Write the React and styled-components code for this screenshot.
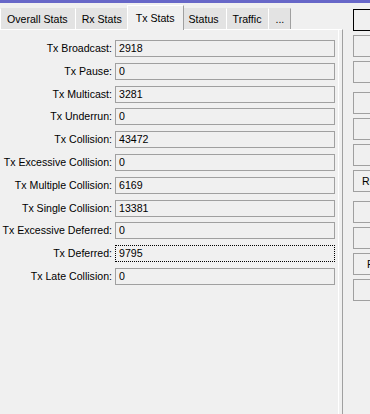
import React from 'react';
import styled, { createGlobalStyle } from 'styled-components';

const GlobalStyle = createGlobalStyle`
  html, body {
    margin: 0;
    padding: 0;
    background: #f0f0f0;
    overflow: hidden;
  }
  body {
    font-family: "Liberation Sans", Arial, sans-serif;
    font-size: 10.6px;
    color: #000;
  }
`;

const Window = styled.div`
  width: 370px;
  height: 414px;
  display: flex;
  flex-direction: column;
  overflow: hidden;
  background: #f0f0f0;
`;

const TitleStrip = styled.div`
  height: 3px;
  background: #6767c8;
  flex-shrink: 0;
`;

const Main = styled.div`
  flex: 1;
  display: flex;
  min-height: 0;
`;

const LeftPane = styled.div`
  width: 343px;
  flex-shrink: 0;
  display: flex;
  flex-direction: column;
`;

const TabBar = styled.div`
  display: flex;
  align-items: flex-end;
  padding-top: 2px;
  height: 24px;
  box-sizing: content-box;
`;

const Tab = styled.div`
  box-sizing: border-box;
  height: ${p => (p.$active ? '25px' : '21px')};
  margin: ${p => (p.$active ? '0 -2px -1px' : '0')};
  padding: 0 ${p => (p.$active ? '8px' : '6px')};
  display: flex;
  align-items: center;
  white-space: nowrap;
  background: ${p => (p.$active ? '#f0f0f0' : '#e3e3e3')};
  border-left: 1px solid #fff;
  border-top: 1px solid ${p => (p.$active ? '#fff' : '#e3e3e3')};
  border-right: 1px solid ${p => (p.$active || p.$last ? '#a0a0a0' : 'transparent')};
  position: relative;
  z-index: ${p => (p.$active ? 1 : 0)};
`;

const Panel = styled.div`
  flex: 1;
  border-top: 1px solid #fff;
  border-right: 1px solid #a0a0a0;
  padding-right: 3px;
  display: flex;
`;

const PanelInner = styled.div`
  flex: 1;
  border-right: 1px solid #fff;
  padding-top: 10px;
`;

const Form = styled.div`
  display: grid;
  grid-template-columns: 112px 220px;
  column-gap: 3px;
  row-gap: 5.8px;
  grid-auto-rows: 17px;
`;

const Label = styled.div`
  text-align: right;
  white-space: nowrap;
  line-height: 17px;
`;

const Field = styled.div`
  box-sizing: border-box;
  height: 17px;
  border: 1px ${p => (p.$focused ? 'dotted #000' : 'solid #a0a0a0')};
  background: #f0f0f0;
  padding-left: 3px;
  line-height: 15px;
  white-space: nowrap;
`;

const ButtonColumn = styled.div`
  margin-left: 10px;
  padding-top: 6px;
  display: flex;
  flex-direction: column;
  gap: 9px;
`;

const ButtonGroup = styled.div`
  display: flex;
  flex-direction: column;
  gap: 4px;
`;

const Button = styled.div`
  box-sizing: border-box;
  width: 92px;
  height: 22px;
  border: 1px solid ${p => (p.$default ? '#000' : '#a0a0a0')};
  background: #f0f0f0;
  display: flex;
  align-items: center;
  padding-left: ${p => (p.$indent != null ? `${p.$indent}px` : '0')};
  white-space: nowrap;
  overflow: hidden;
`;

const tabs = ['Overall Stats', 'Rx Stats', 'Tx Stats', 'Status', 'Traffic', '...'];

const stats = [
  ['Tx Broadcast:', '2918'],
  ['Tx Pause:', '0'],
  ['Tx Multicast:', '3281'],
  ['Tx Underrun:', '0'],
  ['Tx Collision:', '43472'],
  ['Tx Excessive Collision:', '0'],
  ['Tx Multiple Collision:', '6169'],
  ['Tx Single Collision:', '13381'],
  ['Tx Excessive Deferred:', '0'],
  ['Tx Deferred:', '9795'],
  ['Tx Late Collision:', '0'],
];

// only the long labels reach into the visible strip of the button column
const buttonGroups = [
  [{ id: 'ok', def: true }, { id: 'cancel' }, { id: 'apply' }],
  [{ id: 'disable' }, { id: 'comment' }, { id: 'copy' }, { id: 'resetmac', label: 'Reset MAC Address', indent: 8 }],
  [{ id: 'torch' }, { id: 'cable' }, { id: 'resetcnt', label: 'Reset Counters', indent: 13 }, { id: 'blink' }],
];

const App = () => {
  return (
    <>
      <GlobalStyle />
      <Window>
        <TitleStrip />
        <Main>
          <LeftPane>
            <TabBar>
              {tabs.map((t, i) => (
                <Tab key={t} $active={t === 'Tx Stats'} $last={i === tabs.length - 1}>
                  {t}
                </Tab>
              ))}
            </TabBar>
            <Panel>
              <PanelInner>
                <Form>
                  {stats.map(([label, value]) => (
                    <React.Fragment key={label}>
                      <Label>{label}</Label>
                      <Field $focused={label === 'Tx Deferred:'}>{value}</Field>
                    </React.Fragment>
                  ))}
                </Form>
              </PanelInner>
            </Panel>
          </LeftPane>
          <ButtonColumn>
            {buttonGroups.map((group, gi) => (
              <ButtonGroup key={gi}>
                {group.map(b => (
                  <Button key={b.id} $default={b.def} $indent={b.indent}>
                    {b.label}
                  </Button>
                ))}
              </ButtonGroup>
            ))}
          </ButtonColumn>
        </Main>
      </Window>
    </>
  );
};

export default App;
